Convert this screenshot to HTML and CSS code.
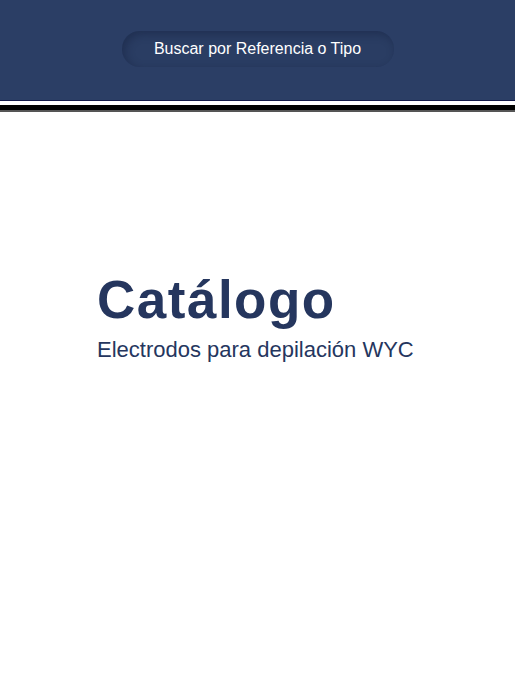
FILE: index.html
```html
<!DOCTYPE html>
<html lang="es">
<head>
<meta charset="utf-8">
<title>Catálogo</title>
<link rel="stylesheet" href="styles.css">
</head>
<body>
<header class="top">
  <div class="search">Buscar por Referencia o Tipo</div>
</header>
<div class="stripes">
  <div class="s-white"></div>
  <div class="s-black"></div>
  <div class="s-gray"></div>
</div>
<main class="hero">
  <h1 class="title">Catálogo</h1>
  <p class="subtitle">Electrodos para depilación WYC</p>
</main>
</body>
</html>
```
FILE: styles.css
```css
* { box-sizing: border-box; }
html, body { margin: 0; padding: 0; background: #fff; }
body { font-family: "Liberation Sans", Arial, sans-serif; }
.top {
  height: 101px;
  background: #2b3e65;
  border-bottom: 1px solid #141a4a;
  display: flex;
  justify-content: center;
  padding-top: 31px;
}
.search {
  width: 272px;
  height: 36px;
  border-radius: 18px;
  background: #2a3d63;
  box-shadow: inset 3px 3px 8px rgba(20, 30, 60, 0.45);
  color: #fff;
  font-size: 16px;
  display: flex;
  align-items: center;
  justify-content: center;
  padding-bottom: 1px;
}
.stripes { display: flex; flex-direction: column; }
.s-white { height: 4px; background: #fff; }
.s-black { height: 5px; background: #000; }
.s-gray { height: 2px; background: #555; }
.hero {
  padding: 0 0 0 97px;
  margin-top: 158px;
}
.title {
  margin: 0;
  font-size: 53px;
  font-weight: 700;
  letter-spacing: 1.5px;
  color: #25365e;
  line-height: 60px;
}
.subtitle {
  margin: 8px 0 0;
  font-size: 22px;
  color: #25365e;
  line-height: 24px;
}
```
